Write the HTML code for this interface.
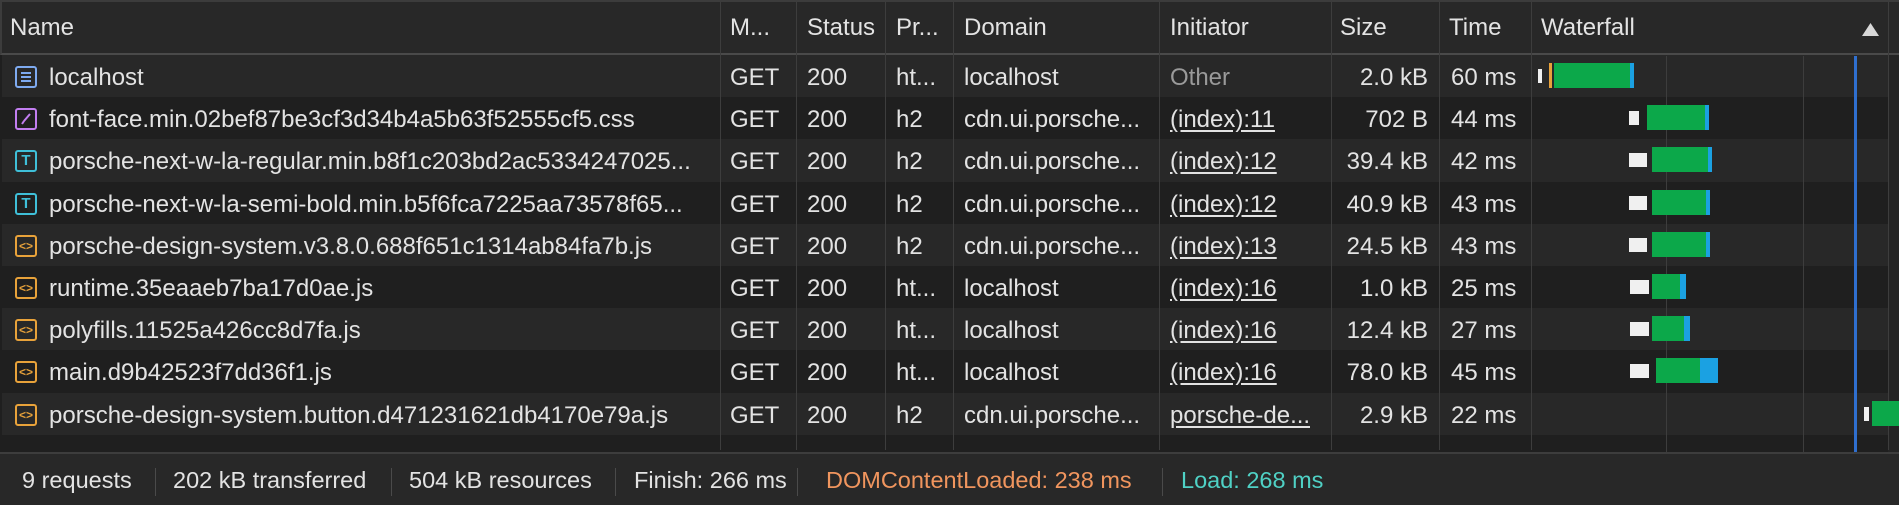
<!DOCTYPE html>
<html><head><style>
*{margin:0;padding:0;box-sizing:border-box}
body{width:1899px;height:505px;background:#1f1f1f;font-family:"Liberation Sans",Arial,sans-serif;font-size:24px;color:#e3e3e3;position:relative;overflow:hidden}
.abs{position:absolute}
.hdr{left:0;top:0;width:1899px;height:55px;background:#282828;border-top:2px solid #3c3c3c;border-left:2px solid #3c3c3c;border-bottom:2px solid #4a4a4a}
.row{position:absolute;left:2px;width:1886px;height:42.2px}
.c{position:absolute;top:0;height:100%;line-height:46px;white-space:nowrap;overflow:hidden}
.vl{position:absolute;top:2px;width:1px;background:#3d3d3d;height:448px}
.ic{position:absolute;left:13px;top:11px;width:22px;height:22px;border:2px solid;border-radius:3px}
.u{text-decoration:underline;text-underline-offset:3px}
.bar{position:absolute;height:25px;top:8px}
.w{background:#f0f0f0;height:14px;top:14px}
.g{background:#0ca84a}
.b{background:#1ba1e2}
.foot{left:0;top:452px;width:1899px;height:53px;background:#282828;border-top:2px solid #3d3d3d}
.ft{position:absolute;top:13px;font-size:23.5px}
.fs{position:absolute;top:14px;width:1px;height:28px;background:#4a4a4a}
.js{border-color:#e8a23a;font-size:12px;line-height:18px;text-align:center;color:#e8a23a;font-weight:bold}
.ff{border-color:#3fbfd8;font-size:15px;line-height:18px;text-align:center;color:#3fbfd8;font-weight:bold}
</style></head><body>
<div class="abs hdr">
<div class="c" style="left:8px;line-height:52px">Name</div>
<div class="c" style="left:728px;line-height:52px">M...</div>
<div class="c" style="left:805px;line-height:52px">Status</div>
<div class="c" style="left:894px;line-height:52px">Pr...</div>
<div class="c" style="left:962px;line-height:52px">Domain</div>
<div class="c" style="left:1168px;line-height:52px">Initiator</div>
<div class="c" style="left:1338px;line-height:52px">Size</div>
<div class="c" style="left:1447px;line-height:52px">Time</div>
<div class="c" style="left:1539px;line-height:52px">Waterfall</div>
<svg class="abs" style="left:1860px;top:21px" width="17" height="14"><polygon points="8.5,0 17,13 0,13" fill="#d8d8d8"/></svg>
</div>

<div class="row" style="top:55px;background:#282828"></div>
<div class="row" style="top:97.2px;background:#1f1f1f"></div>
<div class="row" style="top:139.4px;background:#282828"></div>
<div class="row" style="top:181.6px;background:#1f1f1f"></div>
<div class="row" style="top:223.8px;background:#282828"></div>
<div class="row" style="top:266px;background:#1f1f1f"></div>
<div class="row" style="top:308.2px;background:#282828"></div>
<div class="row" style="top:350.4px;background:#1f1f1f"></div>
<div class="row" style="top:392.6px;background:#282828"></div>
<div class="abs" style="left:2px;top:434.8px;width:1886px;height:17px;background:#1f1f1f"></div>
<div class="abs" style="left:1888px;top:55px;width:11px;height:397px;background:#242424"></div>

<div class="vl" style="left:720px"></div><div class="vl" style="left:796px"></div><div class="vl" style="left:885px"></div><div class="vl" style="left:953px"></div><div class="vl" style="left:1159px"></div><div class="vl" style="left:1331px"></div><div class="vl" style="left:1439px"></div><div class="vl" style="left:1531px"></div><div class="vl" style="left:1888px"></div>
<div class="vl" style="left:1666px;top:56px;height:396px"></div>
<div class="vl" style="left:1803px;top:56px;height:396px"></div>
<div class="abs" style="left:1854px;top:56px;width:3px;height:396px;background:#2f6fcf"></div>

<div class="abs" style="left:0;top:55px;width:1899px">
<div class="row" style="top:0;background:none">
<div class="ic" style="border-color:#7eaaf0"><svg width="18" height="18" style="position:absolute;left:0;top:0"><path d="M4 5h10M4 9h10M4 13h10" stroke="#7eaaf0" stroke-width="2"/></svg></div>
<div class="c" style="left:47px">localhost</div><div class="c" style="left:728px">GET</div><div class="c" style="left:805px">200</div><div class="c" style="left:894px">ht...</div><div class="c" style="left:962px">localhost</div><div class="c" style="left:1168px;color:#9a9a9a">Other</div><div class="c" style="right:460px">2.0 kB</div><div class="c" style="left:1449px">60 ms</div>
<div class="bar w" style="left:1536px;width:4px"></div><div class="bar" style="left:1547px;width:3px;background:#e8a23a"></div><div class="bar g" style="left:1552px;width:76px"></div><div class="bar b" style="left:1628px;width:4px"></div>
</div>
<div class="row" style="top:42.2px;background:none">
<div class="ic" style="border-color:#c27ef0"><svg width="18" height="18" style="position:absolute;left:0;top:0"><path d="M13 4L7 11M5 14l2-3" stroke="#c27ef0" stroke-width="2"/></svg></div>
<div class="c" style="left:47px">font-face.min.02bef87be3cf3d34b4a5b63f52555cf5.css</div><div class="c" style="left:728px">GET</div><div class="c" style="left:805px">200</div><div class="c" style="left:894px">h2</div><div class="c" style="left:962px">cdn.ui.porsche...</div><div class="c u" style="left:1168px">(index):11</div><div class="c" style="right:460px">702 B</div><div class="c" style="left:1449px">44 ms</div>
<div class="bar w" style="left:1627px;width:10px"></div><div class="bar g" style="left:1645px;width:58px"></div><div class="bar b" style="left:1703px;width:4px"></div>
</div>
<div class="row" style="top:84.4px;background:none">
<div class="ic ff">T</div>
<div class="c" style="left:47px">porsche-next-w-la-regular.min.b8f1c203bd2ac5334247025...</div><div class="c" style="left:728px">GET</div><div class="c" style="left:805px">200</div><div class="c" style="left:894px">h2</div><div class="c" style="left:962px">cdn.ui.porsche...</div><div class="c u" style="left:1168px">(index):12</div><div class="c" style="right:460px">39.4 kB</div><div class="c" style="left:1449px">42 ms</div>
<div class="bar w" style="left:1627px;width:18px"></div><div class="bar g" style="left:1650px;width:56px"></div><div class="bar b" style="left:1706px;width:4px"></div>
</div>
<div class="row" style="top:126.6px;background:none">
<div class="ic ff">T</div>
<div class="c" style="left:47px">porsche-next-w-la-semi-bold.min.b5f6fca7225aa73578f65...</div><div class="c" style="left:728px">GET</div><div class="c" style="left:805px">200</div><div class="c" style="left:894px">h2</div><div class="c" style="left:962px">cdn.ui.porsche...</div><div class="c u" style="left:1168px">(index):12</div><div class="c" style="right:460px">40.9 kB</div><div class="c" style="left:1449px">43 ms</div>
<div class="bar w" style="left:1627px;width:18px"></div><div class="bar g" style="left:1650px;width:54px"></div><div class="bar b" style="left:1704px;width:4px"></div>
</div>
<div class="row" style="top:168.8px;background:none">
<div class="ic js">&lt;&gt;</div>
<div class="c" style="left:47px">porsche-design-system.v3.8.0.688f651c1314ab84fa7b.js</div><div class="c" style="left:728px">GET</div><div class="c" style="left:805px">200</div><div class="c" style="left:894px">h2</div><div class="c" style="left:962px">cdn.ui.porsche...</div><div class="c u" style="left:1168px">(index):13</div><div class="c" style="right:460px">24.5 kB</div><div class="c" style="left:1449px">43 ms</div>
<div class="bar w" style="left:1627px;width:18px"></div><div class="bar g" style="left:1650px;width:54px"></div><div class="bar b" style="left:1704px;width:4px"></div>
</div>
<div class="row" style="top:211px;background:none">
<div class="ic js">&lt;&gt;</div>
<div class="c" style="left:47px">runtime.35eaaeb7ba17d0ae.js</div><div class="c" style="left:728px">GET</div><div class="c" style="left:805px">200</div><div class="c" style="left:894px">ht...</div><div class="c" style="left:962px">localhost</div><div class="c u" style="left:1168px">(index):16</div><div class="c" style="right:460px">1.0 kB</div><div class="c" style="left:1449px">25 ms</div>
<div class="bar w" style="left:1628px;width:19px"></div><div class="bar g" style="left:1650px;width:28px"></div><div class="bar b" style="left:1678px;width:6px"></div>
</div>
<div class="row" style="top:253.2px;background:none">
<div class="ic js">&lt;&gt;</div>
<div class="c" style="left:47px">polyfills.11525a426cc8d7fa.js</div><div class="c" style="left:728px">GET</div><div class="c" style="left:805px">200</div><div class="c" style="left:894px">ht...</div><div class="c" style="left:962px">localhost</div><div class="c u" style="left:1168px">(index):16</div><div class="c" style="right:460px">12.4 kB</div><div class="c" style="left:1449px">27 ms</div>
<div class="bar w" style="left:1628px;width:19px"></div><div class="bar g" style="left:1650px;width:32px"></div><div class="bar b" style="left:1682px;width:6px"></div>
</div>
<div class="row" style="top:295.4px;background:none">
<div class="ic js">&lt;&gt;</div>
<div class="c" style="left:47px">main.d9b42523f7dd36f1.js</div><div class="c" style="left:728px">GET</div><div class="c" style="left:805px">200</div><div class="c" style="left:894px">ht...</div><div class="c" style="left:962px">localhost</div><div class="c u" style="left:1168px">(index):16</div><div class="c" style="right:460px">78.0 kB</div><div class="c" style="left:1449px">45 ms</div>
<div class="bar w" style="left:1628px;width:19px"></div><div class="bar g" style="left:1654px;width:44px"></div><div class="bar b" style="left:1698px;width:18px"></div>
</div>
<div class="row" style="top:337.6px;background:none">
<div class="ic js">&lt;&gt;</div>
<div class="c" style="left:47px">porsche-design-system.button.d471231621db4170e79a.js</div><div class="c" style="left:728px">GET</div><div class="c" style="left:805px">200</div><div class="c" style="left:894px">h2</div><div class="c" style="left:962px">cdn.ui.porsche...</div><div class="c u" style="left:1168px">porsche-de...</div><div class="c" style="right:460px">2.9 kB</div><div class="c" style="left:1449px">22 ms</div>
<div class="bar w" style="left:1862px;width:5px"></div><div class="bar g" style="left:1870px;width:30px"></div>
</div>
</div>

<div class="abs foot">
<div class="ft" style="left:22px">9 requests</div><div class="fs" style="left:155px"></div>
<div class="ft" style="left:173px">202 kB transferred</div><div class="fs" style="left:391px"></div>
<div class="ft" style="left:409px">504 kB resources</div><div class="fs" style="left:615px"></div>
<div class="ft" style="left:634px">Finish: 266 ms</div><div class="fs" style="left:797px"></div>
<div class="ft" style="left:826px;color:#f0955e">DOMContentLoaded: 238 ms</div><div class="fs" style="left:1162px"></div>
<div class="ft" style="left:1181px;color:#4fd1c5">Load: 268 ms</div>
</div>
</body></html>
